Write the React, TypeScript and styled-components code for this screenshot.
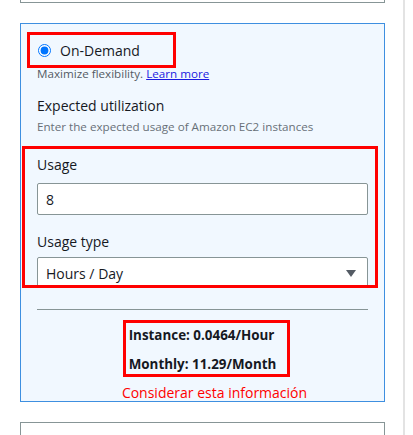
import React from "react";
import styled, { createGlobalStyle } from "styled-components";

const GlobalStyle = createGlobalStyle`
  html, body { margin: 0; padding: 0; background: #ffffff; }
  body {
    font-family: "Open Sans", "Noto Sans", Arial, sans-serif;
    color: #16191f;
    overflow: hidden;
  }
`;

const Page = styled.div`
  display: flex;
  height: 435px;
  overflow: hidden;
`;

const Column = styled.div`
  width: 383px;
  padding-left: 20px;
  display: flex;
  flex-direction: column;
`;

const Rail = styled.div`
  width: 2px;
  background: #e3e3e3;
`;

const Card = styled.div<{ $selected?: boolean; $open?: "top" | "bottom" }>`
  box-sizing: border-box;
  flex: none;
  width: 365px;
  border: 1px solid ${(p) => (p.$selected ? "#3e8fe0" : "#879596")};
  background: ${(p) => (p.$selected ? "#f1f8ff" : "#ffffff")};
  ${(p) => (p.$open === "top" ? "border-top: none; height: 3px;" : "")}
  ${(p) => (p.$open === "bottom" ? "border-bottom: none; height: 40px;" : "")}
  margin-top: ${(p) => (p.$open === "top" ? "0" : "20px")};
  display: flex;
  flex-direction: column;
`;

const Highlight = styled.div<{ $ml: number; $mt: number; $w?: number }>`
  box-sizing: border-box;
  flex: none;
  border: 3px solid #ff0000;
  margin-left: ${(p) => p.$ml}px;
  margin-top: ${(p) => p.$mt}px;
  ${(p) => (p.$w ? `width: ${p.$w}px;` : "")}
`;

const RadioRow = styled.label`
  display: flex;
  align-items: center;
  height: 30px;
  padding-left: 8px;
  gap: 9px;
  font-size: 14px;
  line-height: 20px;
  padding-top: 2px;
  box-sizing: border-box;
  color: #16191f;
`;

const Radio = styled.input`
  margin: 0 0 1px 0;
  width: 13px;
  height: 13px;
  accent-color: #0075ff;
`;

const Hint = styled.div<{ $mt?: number; $lh?: number; $muted?: boolean }>`
  margin-left: 16px;
  margin-top: ${(p) => p.$mt ?? 0}px;
  font-size: 11.65px;
  line-height: ${(p) => p.$lh ?? 16}px;
  color: ${(p) => (p.$muted ? "#687078" : "#545b64")};
`;

const Link = styled.a`
  color: #1a1ae0;
  text-decoration: underline;
`;

const Heading = styled.div`
  margin-left: 16px;
  margin-top: 17px;
  font-size: 14px;
  line-height: 20px;
  color: #16191f;
`;

const FieldGroup = styled.div`
  height: 136px;
  overflow: hidden;
  padding-left: 12px;
`;

const Label = styled.div<{ $mt: number }>`
  margin-top: ${(p) => p.$mt}px;
  font-size: 14px;
  line-height: 20px;
  color: #16191f;
`;

const TextInput = styled.input`
  display: block;
  box-sizing: border-box;
  margin: 8px 0 0 0;
  width: 331px;
  height: 32px;
  border: 1px solid #879596;
  border-radius: 2px;
  padding: 0 8px;
  font-family: inherit;
  font-size: 14px;
  color: #16191f;
  background: #ffffff;
  outline: none;
`;

const Select = styled.div`
  box-sizing: border-box;
  margin-top: 5px;
  width: 331px;
  height: 32px;
  border: 1px solid #879596;
  border-radius: 2px;
  padding: 1px 11px 0 8px;
  display: flex;
  align-items: center;
  justify-content: space-between;
  font-size: 14px;
  color: #16191f;
  background: #ffffff;
`;

const Caret = styled.svg`
  width: 10px;
  height: 7px;
  fill: #545b64;
`;

const Divider = styled.div`
  flex: none;
  margin: 21px 0 0 16px;
  width: 331px;
  height: 1px;
  background: #879596;
`;

const Summary = styled.div`
  display: flex;
  flex-direction: column;
  align-items: center;
`;

const Totals = styled.div`
  display: flex;
  flex-direction: column;
  gap: 9px;
  padding: 2px 11px 0 3px;
`;

const Total = styled.div`
  font-size: 13.4px;
  font-weight: 700;
  line-height: 20px;
  color: #16191f;
`;

const Note = styled.div`
  margin: 8px 0 0 24px;
  font-size: 14px;
  line-height: 16px;
  color: #ff0000;
`;

export default function App() {
  return (
    <>
      <GlobalStyle />
      <Page>
        <Column>
          <Card $open="top" />
          <Card $selected>
            <Highlight $ml={6} $mt={8} $w={149}>
              <RadioRow>
                <Radio type="radio" checked readOnly />
                On-Demand
              </RadioRow>
            </Highlight>
            <Hint $lh={11}>
              Maximize flexibility. <Link href="#">Learn more</Link>
            </Hint>
            <Heading>Expected utilization</Heading>
            <Hint $mt={3} $muted>
              Enter the expected usage of Amazon EC2 instances
            </Hint>
            <Highlight $ml={1} $mt={11} $w={356}>
              <FieldGroup>
                <Label $mt={6}>Usage</Label>
                <TextInput value="8" readOnly />
                <Label $mt={17}>Usage type</Label>
                <Select>
                  <span>Hours / Day</span>
                  <Caret viewBox="0 0 10 7">
                    <path d="M0 0h10L5 7z" />
                  </Caret>
                </Select>
              </FieldGroup>
            </Highlight>
            <Divider />
            <Summary>
              <Highlight $ml={8} $mt={10}>
                <Totals>
                  <Total>Instance: 0.0464/Hour</Total>
                  <Total>Monthly: 11.29/Month</Total>
                </Totals>
              </Highlight>
              <Note>Considerar esta información</Note>
            </Summary>
          </Card>
          <Card $open="bottom" />
        </Column>
        <Rail />
      </Page>
    </>
  );
}
